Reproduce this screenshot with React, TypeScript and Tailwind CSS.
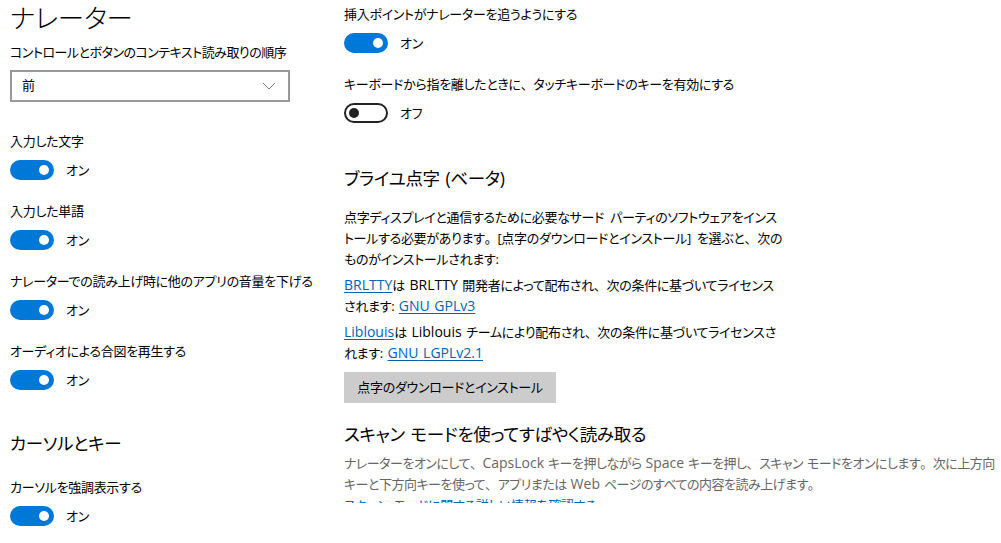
import React from "react";

const font = "[font-family:'Open_Sans','Noto_Sans_CJK_JP',sans-serif] [font-feature-settings:'palt']";

// Latin runs a bit larger, full-width punctuation kept full width (as in Yu Gothic UI)
const jp = (text: string) =>
    text.split(/([A-Za-z0-9.]+|[、。])/).map((part, i) => {
        if (/^[A-Za-z0-9.]+$/.test(part)) {
            return (
                <span key={i} className="text-[14px] leading-none tracking-normal">
                    {part}
                </span>
            );
        }
        if (part === "、" || part === "。") {
            return (
                <span key={i} className="[font-feature-settings:normal]">
                    {part}
                </span>
            );
        }
        return part;
    });

const Toggle = ({ on }: { on: boolean }) => (
    <div className="flex items-center h-[20px]">
        {on ? (
            <div className="w-[44px] h-[20px] rounded-full bg-[#0078d7] flex items-center justify-end pr-[5px]">
                <div className="w-[10px] h-[10px] rounded-full bg-white" />
            </div>
        ) : (
            <div className="w-[44px] h-[20px] rounded-full border-2 border-[#222] flex items-center pl-[3px]">
                <div className="w-[10px] h-[10px] rounded-full bg-[#222]" />
            </div>
        )}
        <span className="ml-[12px] text-[13px] leading-5">{on ? "オン" : "オフ"}</span>
    </div>
);

const Setting = ({ label, on, className }: { label: string; on: boolean; className?: string }) => (
    <div className={className}>
        <div className="text-[13px] leading-5 whitespace-nowrap">{jp(label)}</div>
        <div className="mt-[9px]">
            <Toggle on={on} />
        </div>
    </div>
);

const Link = ({ children }: { children: React.ReactNode }) => (
    <a className="text-[#0063b1] underline underline-offset-2">{children}</a>
);

export default function App() {
    return (
        <div className={`${font} w-[1001px] h-[543px] overflow-hidden bg-white text-black flex tracking-[-0.3px] [word-spacing:1.5px]`}>
            {/* left column */}
            <div className="w-[334px] pl-[10px] shrink-0">
                <h1 className="text-[26.5px] leading-[36px] font-light">ナレーター</h1>
                <div className="mt-[6px] text-[13px] leading-5 whitespace-nowrap tracking-[-0.5px]">
                    コントロールとボタンのコンテキスト読み取りの順序
                </div>
                <div className="mt-[8px] w-[280px] h-[32px] border-2 border-[#999] flex items-center justify-between pl-[10px] pr-[12px]">
                    <span className="text-[13px]">前</span>
                    <svg width="14" height="8" viewBox="0 0 14 8" fill="none">
                        <polyline points="1,1 7,7 13,1" stroke="#777" strokeWidth="1" />
                    </svg>
                </div>
                <Setting className="mt-[29px]" label="入力した文字" on />
                <Setting className="mt-[21px]" label="入力した単語" on />
                <Setting className="mt-[21px]" label="ナレーターでの読み上げ時に他のアプリの音量を下げる" on />
                <Setting className="mt-[21px]" label="オーディオによる合図を再生する" on />
                <h2 className="mt-[39px] text-[17.5px] leading-[28px]">カーソルとキー</h2>
                <Setting className="mt-[20px]" label="カーソルを強調表示する" on />
            </div>

            {/* right column */}
            <div className="pl-[10px] pt-[4px] h-[503px] overflow-hidden flex-1">
                <Setting label="挿入ポイントがナレーターを追うようにする" on />
                <Setting className="mt-[21px]" label="キーボードから指を離したときに、タッチキーボードのキーを有効にする" on={false} />
                <h2 className="mt-[41px] text-[17.5px] leading-[28px]">ブライユ点字 (ベータ)</h2>
                <div className="mt-[15px] text-[13px] leading-[21px] whitespace-nowrap">
                    <p className="[word-spacing:3px]">
                        {jp("点字ディスプレイと通信するために必要なサード パーティのソフトウェアをインス")}
                        <br />
                        {jp("トールする必要があります。[点字のダウンロードとインストール] を選ぶと、次の")}
                        <br />
                        ものがインストールされます:
                    </p>
                    <p className="mt-[5px]">
                        <Link>{jp("BRLTTY")}</Link>
                        {jp("は BRLTTY 開発者によって配布され、次の条件に基づいてライセンス")}
                        <br />
                        されます: <Link>{jp("GNU GPLv3")}</Link>
                    </p>
                    <p className="mt-[5px]">
                        <Link>{jp("Liblouis")}</Link>
                        {jp("は Liblouis チームにより配布され、次の条件に基づいてライセンスさ")}
                        <br />
                        れます: <Link>{jp("GNU LGPLv2.1")}</Link>
                    </p>
                </div>
                <button className="mt-[8px] h-[31px] w-[212px] bg-[#cccccc] text-[13px] whitespace-nowrap">
                    点字のダウンロードとインストール
                </button>
                <h2 className="mt-[17px] text-[17.5px] leading-[28px]">スキャン モードを使ってすばやく読み取る</h2>
                <p className="mt-[5px] text-[13px] leading-[21px] text-[#666] whitespace-nowrap tracking-[-0.5px] [word-spacing:1px]">
                    {jp("ナレーターをオンにして、CapsLock キーを押しながら Space キーを押し、スキャン モードをオンにします。次に上方向")}
                    <br />
                    {jp("キーと下方向キーを使って、アプリまたは Web ページのすべての内容を読み上げます。")}
                </p>
                <div className="text-[13px] leading-[21px]">
                    <Link>スキャン モードに関する詳しい情報を確認する</Link>
                </div>
            </div>
        </div>
    );
}
